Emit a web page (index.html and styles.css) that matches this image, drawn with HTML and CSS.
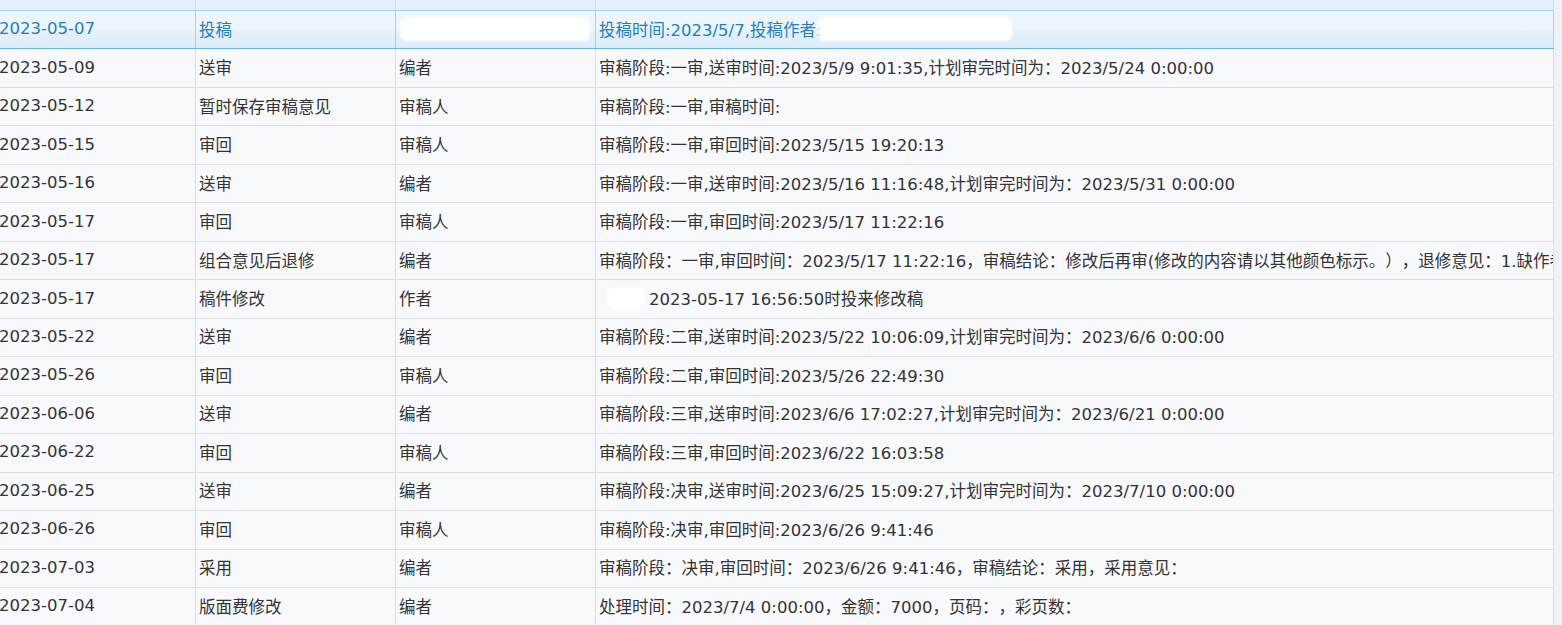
FILE: index.html
```html
<!DOCTYPE html>
<html lang="zh-CN">
<head>
<meta charset="utf-8">
<title>稿件处理记录</title>
<link rel="stylesheet" href="styles.css">
</head>
<body>
<div class="grid">
  <div class="row head"><div class="cell"></div><div class="cell"></div><div class="cell"></div><div class="cell"></div></div>
  <div class="row sel">
    <div class="cell">2023-05-07</div><div class="cell">投稿</div>
    <div class="cell"><span class="mask m1"></span></div>
    <div class="cell">投稿时间:2023/5/7,投稿作者:<span class="mask m2"></span></div>
  </div>
  <div class="row"><div class="cell">2023-05-09</div><div class="cell">送审</div><div class="cell">编者</div><div class="cell">审稿阶段:一审,送审时间:2023/5/9 9:01:35,计划审完时间为：2023/5/24 0:00:00</div></div>
  <div class="row"><div class="cell">2023-05-12</div><div class="cell">暂时保存审稿意见</div><div class="cell">审稿人</div><div class="cell">审稿阶段:一审,审稿时间:</div></div>
  <div class="row"><div class="cell">2023-05-15</div><div class="cell">审回</div><div class="cell">审稿人</div><div class="cell">审稿阶段:一审,审回时间:2023/5/15 19:20:13</div></div>
  <div class="row"><div class="cell">2023-05-16</div><div class="cell">送审</div><div class="cell">编者</div><div class="cell">审稿阶段:一审,送审时间:2023/5/16 11:16:48,计划审完时间为：2023/5/31 0:00:00</div></div>
  <div class="row"><div class="cell">2023-05-17</div><div class="cell">审回</div><div class="cell">审稿人</div><div class="cell">审稿阶段:一审,审回时间:2023/5/17 11:22:16</div></div>
  <div class="row"><div class="cell">2023-05-17</div><div class="cell">组合意见后退修</div><div class="cell">编者</div><div class="cell">审稿阶段：一审,审回时间：2023/5/17 11:22:16，审稿结论：修改后再审(修改的内容请以其他颜色标示。），退修意见：1.缺作者简介；2.参考文献格式不规范。</div></div>
  <div class="row"><div class="cell">2023-05-17</div><div class="cell">稿件修改</div><div class="cell">作者</div><div class="cell"><span class="mask m3"></span>2023-05-17 16:56:50时投来修改稿</div></div>
  <div class="row"><div class="cell">2023-05-22</div><div class="cell">送审</div><div class="cell">编者</div><div class="cell">审稿阶段:二审,送审时间:2023/5/22 10:06:09,计划审完时间为：2023/6/6 0:00:00</div></div>
  <div class="row"><div class="cell">2023-05-26</div><div class="cell">审回</div><div class="cell">审稿人</div><div class="cell">审稿阶段:二审,审回时间:2023/5/26 22:49:30</div></div>
  <div class="row"><div class="cell">2023-06-06</div><div class="cell">送审</div><div class="cell">编者</div><div class="cell">审稿阶段:三审,送审时间:2023/6/6 17:02:27,计划审完时间为：2023/6/21 0:00:00</div></div>
  <div class="row"><div class="cell">2023-06-22</div><div class="cell">审回</div><div class="cell">审稿人</div><div class="cell">审稿阶段:三审,审回时间:2023/6/22 16:03:58</div></div>
  <div class="row"><div class="cell">2023-06-25</div><div class="cell">送审</div><div class="cell">编者</div><div class="cell">审稿阶段:决审,送审时间:2023/6/25 15:09:27,计划审完时间为：2023/7/10 0:00:00</div></div>
  <div class="row"><div class="cell">2023-06-26</div><div class="cell">审回</div><div class="cell">审稿人</div><div class="cell">审稿阶段:决审,审回时间:2023/6/26 9:41:46</div></div>
  <div class="row"><div class="cell">2023-07-03</div><div class="cell">采用</div><div class="cell">编者</div><div class="cell">审稿阶段：决审,审回时间：2023/6/26 9:41:46，审稿结论：采用，采用意见：</div></div>
  <div class="row"><div class="cell">2023-07-04</div><div class="cell">版面费修改</div><div class="cell">编者</div><div class="cell">处理时间：2023/7/4 0:00:00，金额：7000，页码：，彩页数：</div></div>
</div>
</body>
</html>
```

FILE: styles.css
```css
html, body {
  margin: 0;
  padding: 0;
}
body {
  background: #eef2f6;
  font-family: "DejaVu Sans", "Noto Sans CJK SC", sans-serif;
  font-size: 16.5px;
  color: #333;
  overflow: hidden;
  height: 625px;
  text-spacing-trim: space-all;
}
.grid {
  margin: -27.47px 0 0 -4px;
  width: 1558px;
  background: #f8f9fc;
}
.row {
  display: grid;
  grid-template-columns: 200px 200px 200px 1fr;
  height: 38.47px;
  box-sizing: border-box;
  border-bottom: 1px solid #dedede;
}
.cell {
  border-right: 1px solid #dedede;
  padding: 0 0 2px 3px;
  display: flex;
  align-items: center;
  white-space: nowrap;
  overflow: hidden;
  min-width: 0;
}
.head {
  background: #e3effa;
  border-bottom-color: #a8d1f1;
}
.head .cell {
  border-right-color: #cde2f4;
}
.sel {
  background: linear-gradient(to bottom, #eef6fd 0%, #edf5fc 50%, #e5f1fb 54%, #dcecfa 100%);
  border-bottom-color: #68b3ea;
  color: #1f7fc0;
}
.sel .cell {
  border-right-color: #a6cff0;
}
.mask {
  display: inline-block;
  background: #fff;
  border-radius: 7px;
  height: 24px;
  filter: blur(1px);
  flex: none;
}
.m1 {
  width: 190px;
  margin-left: 1px;
}
.m2 {
  width: 194px;
  margin-left: -3px;
}
.m3 {
  width: 38px;
  height: 22px;
  margin-left: 8px;
  margin-right: 4px;
}
```
